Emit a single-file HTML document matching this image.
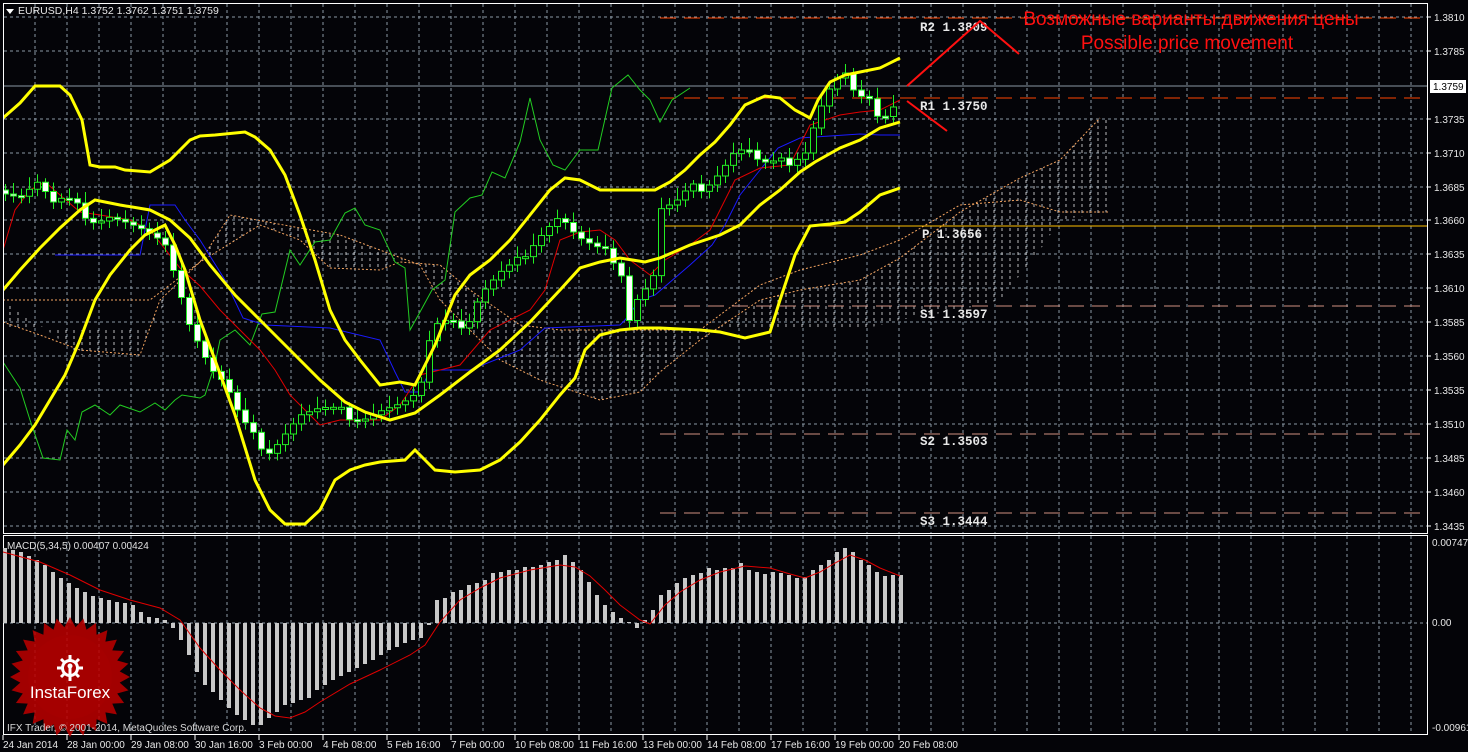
<!DOCTYPE html>
<html><head><meta charset="utf-8"><style>
html,body{margin:0;padding:0;background:#040408;}
svg{display:block;font-family:"Liberation Sans",sans-serif;}
</style></head><body>
<svg id="s" width="1468" height="752" viewBox="0 0 1468 752" xmlns="http://www.w3.org/2000/svg">
<defs>
<pattern id="hatch" width="8" height="6" patternUnits="userSpaceOnUse">
<line x1="2" y1="0" x2="2" y2="3" stroke="#e8e8e8" stroke-width="1"/>
</pattern>
<clipPath id="mainclip"><rect x="3" y="3" width="1425" height="530"/></clipPath>
<clipPath id="macdclip"><rect x="3" y="536" width="1425" height="198"/></clipPath>
</defs>
<rect width="1468" height="752" fill="#040408"/>
<g id="grid" stroke="#8a97a3" stroke-width="1" stroke-dasharray="3,3"></g>

<g clip-path="url(#mainclip)">
<path d="M3,300 L40,325 L80,355 L140,355 L160,300 L200,262 L230,215 L300,228 L340,235 L380,250 L420,265 L440,300 L470,330 L500,360 L540,380 L600,400 L640,392 L660,372 L700,340 L760,300 L800,290 L860,280 L900,258 L960,212 L1020,178 L1060,160 L1100,118 L1108,118 L1108,212 L1060,220 L1040,250 L1000,300 L960,310 L900,320 L860,330 L800,330 L760,328 L700,330 L660,330 L620,330 L600,330 L560,330 L520,325 L470,290 L440,265 L400,260 L380,270 L330,270 L300,240 L260,225 L200,262 L180,275 L150,330 L100,330 L40,330 L3,330 Z" fill="url(#hatch)" opacity="0.8"/>
<polyline fill="none" stroke="#f4a460" stroke-width="1" stroke-dasharray="2,2" points="3,322 40,335 80,350 140,355 160,300 200,262 230,215 300,228 340,235 380,250 420,265 440,300 470,330 500,360 540,380 600,400 640,392 660,372 700,340 760,300 800,290 860,280 900,258 960,212 1020,178 1060,160 1100,118"/>
<polyline fill="none" stroke="#f4a460" stroke-width="1" stroke-dasharray="2,2" points="3,300 50,300 100,300 150,300 200,262 260,225 300,240 330,268 380,270 400,262 440,265 470,290 520,325 560,330 620,330 700,330 760,285 800,270 860,255 900,240 960,205 1020,200 1060,212 1108,212"/>
<line x1="660" y1="18" x2="1428" y2="18" stroke="#ff4500" stroke-width="1" stroke-dasharray="16,8"/>
<line x1="660" y1="98" x2="1428" y2="98" stroke="#ff4500" stroke-width="1" stroke-dasharray="16,8"/>
<line x1="660" y1="226" x2="1428" y2="226" stroke="#ffc000" stroke-width="1"/>
<line x1="660" y1="306" x2="1428" y2="306" stroke="#d09080" stroke-width="1" stroke-dasharray="16,8"/>
<line x1="660" y1="434" x2="1428" y2="434" stroke="#d09080" stroke-width="1" stroke-dasharray="16,8"/>
<line x1="660" y1="513" x2="1428" y2="513" stroke="#d09080" stroke-width="1" stroke-dasharray="16,8"/>
<line x1="3" y1="86" x2="1428" y2="86" stroke="#8a97a3" stroke-width="1"/>
<polyline fill="none" stroke="#22cc22" stroke-width="1" points="3,362 20,388 30,420 43,458 60,460 67,430 75,440 82,412 95,405 110,415 120,405 140,412 155,403 165,410 175,400 182,395 200,398 205,395 215,364 220,340 235,330 250,345 262,314 275,312 290,250 300,265 315,242 330,240 345,213 355,208 365,225 380,230 395,262 405,268 410,330 420,312 432,290 445,280 455,212 470,198 482,195 492,172 505,178 520,142 530,98 540,140 553,165 565,170 580,150 598,150 612,88 628,75 640,90 650,100 660,122 672,100 690,88"/>
<polyline fill="none" stroke="#1a1aff" stroke-width="1" points="55,255 140,255 150,205 175,205 185,220 200,240 225,280 243,318 265,325 330,328 380,340 395,372 405,392 420,392 430,370 470,370 520,350 545,328 620,325 625,320 640,300 655,295 690,265 712,245 725,225 740,195 752,180 760,170 778,148 800,138 830,136 860,134 880,135 900,135"/>
<polyline fill="none" stroke="#e00000" stroke-width="1" points="3,250 15,210 30,190 45,182 60,195 80,212 100,215 130,220 150,230 180,268 200,286 220,310 240,330 260,350 275,370 290,395 305,410 320,425 340,420 380,420 400,405 420,375 440,370 460,365 490,330 510,320 530,310 545,290 560,240 580,232 600,230 615,240 630,260 650,275 665,260 690,245 710,230 725,200 735,180 760,168 790,165 810,125 840,115 860,112 880,110 900,100"/>
<g id="candles"></g>
<g fill="none" stroke="#ffff00" stroke-width="3">
<polyline points="3,118 20,103 35,86 60,86 70,95 82,120 90,165 100,167 115,167 125,170 150,172 170,160 190,140 200,136 215,135 245,132 255,137 270,150 285,175 300,215 315,260 330,310 345,340 360,360 380,385 400,382 415,385 425,365 435,345 455,295 470,275 490,260 510,240 530,215 550,190 565,178 580,180 600,190 630,190 655,190 670,182 685,170 700,155 715,142 730,125 745,105 765,96 780,98 795,110 810,118 818,100 830,82 845,75 860,72 880,68 900,58"/>
<polyline points="3,290 20,270 40,248 60,228 80,210 95,200 120,205 150,210 170,220 190,238 210,265 235,295 260,320 290,350 320,380 345,402 365,412 390,420 415,413 440,395 470,372 500,350 530,322 560,290 580,268 600,262 620,258 645,262 660,258 690,245 720,235 740,225 760,205 780,190 800,172 815,162 840,148 860,140 880,128 900,122"/>
<polyline points="3,465 20,445 35,425 50,400 65,375 80,340 95,300 110,275 130,250 145,235 165,225 175,245 185,270 200,320 215,360 235,415 255,480 270,510 285,524 305,524 320,510 335,480 350,470 365,465 380,462 405,460 415,450 425,460 435,470 455,472 480,470 500,460 520,442 540,420 560,395 575,378 585,350 600,335 620,330 640,328 660,328 700,330 720,332 745,338 770,332 780,300 795,255 810,226 830,224 845,222 860,212 880,195 900,188"/>
</g>
</g>
<rect x="3.5" y="3.5" width="1424" height="530" fill="none" stroke="#fff" stroke-width="1"/>
<rect x="3.5" y="535.5" width="1424" height="199" fill="none" stroke="#fff" stroke-width="1"/>
<g clip-path="url(#macdclip)">
<g id="macd" stroke="#c8c8c8" stroke-width="4"></g>
<polyline fill="none" stroke="#e00000" stroke-width="1" points="3,552 40,562 70,575 100,590 130,600 160,608 180,620 200,648 220,670 240,690 260,708 275,716 290,718 305,712 320,702 350,684 380,670 410,655 425,645 440,622 460,600 480,588 500,578 530,570 560,565 575,567 590,576 605,590 620,605 640,620 650,624 665,605 680,592 700,580 720,572 745,566 770,568 790,574 805,578 820,572 835,563 850,555 865,560 880,568 900,576"/>
</g>
<g id="logo" opacity="0.88"></g>
<g transform="translate(70,668)" fill="#fff">
<circle r="9"/>
<g stroke="#fff" stroke-width="3">
<line x1="0" y1="-13" x2="0" y2="13"/><line x1="-13" y1="0" x2="13" y2="0"/>
<line x1="-9" y1="-9" x2="9" y2="9"/><line x1="-9" y1="9" x2="9" y2="-9"/>
</g>
<circle r="6" fill="#b00000"/>
<circle cy="-2" r="2.5" fill="#fff"/>
<rect x="-1.5" y="-1" width="3" height="12" fill="#fff"/>
</g>
<text x="70" y="698" fill="#fff" font-size="17" text-anchor="middle">InstaForex</text>
<text x="7" y="731" fill="#d8d8d8" font-size="10">IFX Trader, © 2001-2014, MetaQuotes Software Corp.</text>
<text x="7" y="549" fill="#e0e0e0" font-size="10">MACD(5,34,5) 0.00407 0.00424</text>
<polygon points="6,9 14,9 10,14" fill="#fff"/>
<text x="18" y="14" fill="#e8e8e8" font-size="10.5">EURUSD,H4  1.3752 1.3762 1.3751 1.3759</text>
<g fill="#e8e8e8" font-family="'Liberation Mono',monospace" font-weight="bold" font-size="12.5">
<text x="920" y="31">R2 1.3809</text>
<text x="920" y="110">R1 1.3750</text>
<text x="922" y="238">P 1.3656</text>
<text x="920" y="318">S1 1.3597</text>
<text x="920" y="445">S2 1.3503</text>
<text x="920" y="525">S3 1.3444</text>
</g>
<polyline points="907,86 980,21 1019,54" fill="none" stroke="#ff1010" stroke-width="2"/>
<line x1="907" y1="101" x2="947" y2="131" stroke="#ff1010" stroke-width="2"/>
<text x="1191" y="25" fill="#ff1010" font-size="19" text-anchor="middle">Возможные варианты движения цены</text>
<text x="1187" y="49" fill="#ff1010" font-size="19" text-anchor="middle">Possible price movement</text>
<g id="axis" fill="#e8e8e8" font-size="10"></g>
<rect x="1430" y="80" width="36" height="13" fill="#fff"/>
<text x="1433" y="90" fill="#000" font-size="10">1.3759</text>
<text x="1432" y="546" fill="#e8e8e8" font-size="10">0.00747</text>
<text x="1432" y="626" fill="#e8e8e8" font-size="10">0.00</text>
<text x="1432" y="731" fill="#e8e8e8" font-size="10">-0.00961</text>
<g id="time" fill="#e8e8e8" font-size="10"></g>
</svg>
<script>
(function(){
var NS="http://www.w3.org/2000/svg";
function el(p,t,a,txt){var e=document.createElementNS(NS,t);for(var k in a)e.setAttribute(k,a[k]);if(txt)e.textContent=txt;p.appendChild(e);return e;}
var g=document.getElementById('grid');
for(var x=35;x<1428;x+=32){el(g,'line',{x1:x,y1:4,x2:x,y2:533});el(g,'line',{x1:x,y1:536,x2:x,y2:734});}
var ax=document.getElementById('axis');
var pr=["1.3810","1.3785","","1.3735","1.3710","1.3685","1.3660","1.3635","1.3610","1.3585","1.3560","1.3535","1.3510","1.3485","1.3460","1.3435"];
for(var i=0;i<16;i++){var y=Math.round(17+i*33.9);if(i!=2){el(g,'line',{x1:4,y1:y,x2:1428,y2:y});el(ax,'line',{x1:1428,y1:y,x2:1431,y2:y,stroke:'#fff'});el(ax,'text',{x:1434,y:y+4},pr[i]);}}
el(g,'line',{x1:4,y1:623,x2:1428,y2:623});
var tl=["24 Jan 2014","28 Jan 00:00","29 Jan 08:00","30 Jan 16:00","3 Feb 00:00","4 Feb 08:00","5 Feb 16:00","7 Feb 00:00","10 Feb 08:00","11 Feb 16:00","13 Feb 00:00","14 Feb 08:00","17 Feb 16:00","19 Feb 00:00","20 Feb 08:00"];
var tg=document.getElementById('time');
for(var i=0;i<tl.length;i++){var x=3+i*64;el(tg,'line',{x1:x,y1:735,x2:x,y2:740,stroke:'#fff'});el(tg,'text',{x:x,y:748},tl[i]);}
var pts=[[5,190],[20,195],[40,180],[50,205],[65,200],[80,210],[95,220],[110,215],[125,222],[140,230],[155,240],[170,255],[180,290],[190,325],[200,345],[210,368],[225,385],[240,420],[255,440],[270,450],[285,432],[300,415],[320,410],[340,412],[360,418],[380,410],[400,405],[412,400],[425,380],[432,320],[450,315],[465,330],[480,295],[500,275],[515,265],[530,245],[545,228],[560,215],[570,230],[580,240],[595,250],[610,255],[620,265],[628,320],[640,290],[652,285],[660,210],[675,205],[690,190],[705,185],[720,170],[735,150],[748,150],[760,165],[775,165],[790,160],[805,150],[815,120],[825,95],[835,80],[845,75],[852,92],[860,100],[872,105],[880,115],[890,110],[900,90]];
function py(x){for(var i=0;i<pts.length-1;i++){if(x>=pts[i][0]&&x<=pts[i+1][0]){var t=(x-pts[i][0])/(pts[i+1][0]-pts[i][0]);return pts[i][1]+t*(pts[i+1][1]-pts[i][1]);}}return pts[pts.length-1][1];}
var cg=document.getElementById('candles');var prev=py(5);
for(var x=5;x<=900;x+=8){var c=py(x)+((x*37)%11-5);var o=prev;var hi=Math.min(o,c)-4-((x*13)%9);var lo=Math.max(o,c)+4+((x*7)%8);
el(cg,'line',{x1:x+0.5,y1:hi,x2:x+0.5,y2:lo,stroke:'#22ee22','stroke-width':1});
var tp=Math.min(o,c),h=Math.max(Math.abs(o-c),2);
el(cg,'rect',{x:x-2.5,y:tp,width:6,height:h,fill:(c>o?'#fff':'#040408'),stroke:'#22ee22','stroke-width':1});prev=c;}
var mv=[548,550,552,556,560,565,572,578,583,588,592,596,598,600,602,603,605,612,617,618,620,628,640,655,672,685,692,700,708,715,720,725,725,718,712,705,703,700,698,690,685,680,676,672,668,664,660,655,650,647,643,640,638,625,600,598,592,590,585,583,580,573,572,570,570,567,567,565,562,560,555,562,570,582,595,605,612,618,622,628,620,610,595,590,583,578,575,573,568,570,568,568,563,570,572,574,572,573,575,578,577,570,565,560,552,548,552,560,565,572,576,575,575];
var mg=document.getElementById('macd');
for(var i=0;i<mv.length;i++){var x=5+i*8;if(x>902)break;el(mg,'line',{x1:x,y1:623,x2:x,y2:mv[i]});}
var lg=document.getElementById('logo');var s="";var n=28;
for(var i=0;i<2*n;i++){var r=(i%2==0)?60:50;var a=Math.PI*i/n;s+=(70+r*Math.cos(a)).toFixed(1)+","+(677+r*Math.sin(a)).toFixed(1)+" ";}
el(lg,'polygon',{points:s,fill:'#b80000'});
el(lg,'circle',{cx:70,cy:677,r:42,fill:'#c00000',opacity:0.5});
})();
</script>
</body></html>
